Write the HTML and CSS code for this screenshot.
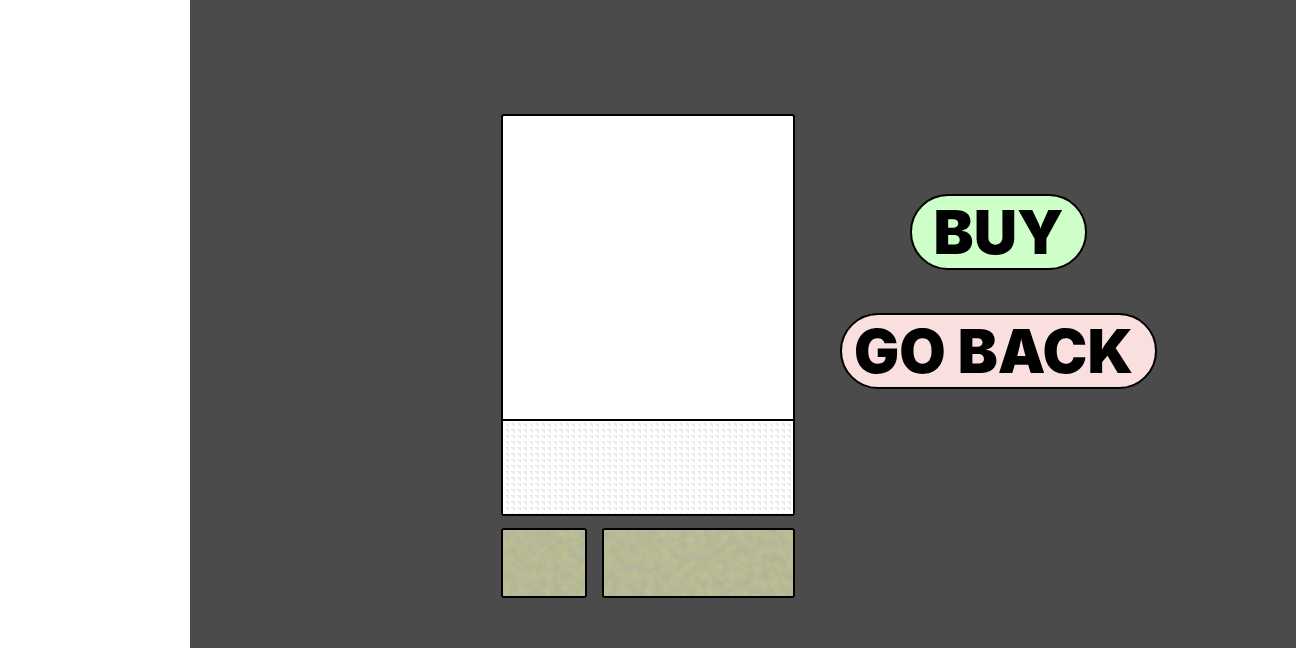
FILE: index.html
```html
<!DOCTYPE html>
<html lang="en">
<head>
<meta charset="utf-8">
<title>Buy card</title>
<link rel="stylesheet" href="styles.css">
</head>
<body>
<div class="page">
  <aside class="sidebar"></aside>
  <main class="stage">
    <section class="card">
      <div class="frame">
        <div class="picture"></div>
        <div class="mesh"></div>
      </div>
      <div class="labels">
        <div class="label">
          <svg class="paper" aria-hidden="true">
            <filter id="grain" x="0" y="0" width="100%" height="100%" color-interpolation-filters="sRGB">
              <feTurbulence type="fractalNoise" baseFrequency="0.12" numOctaves="4" seed="7"/>
              <feColorMatrix values="0.10 0 0 0 0.67  0.07 0 0 0 0.693  0 0.09 0 0 0.54  0 0 0 0 1"/>
            </filter>
            <rect width="100%" height="100%" filter="url(#grain)"/>
          </svg>
        </div>
        <div class="label">
          <svg class="paper" aria-hidden="true"><rect width="100%" height="100%" filter="url(#grain)"/></svg>
        </div>
      </div>
    </section>
    <div class="actions">
      <button class="action buy" type="button">BUY</button>
      <button class="action back" type="button">GO BACK</button>
    </div>
  </main>
</div>
</body>
</html>
```
FILE: styles.css
```css
* { box-sizing: border-box; }
body { margin: 0; background: #fff; }
.page { display: flex; min-height: 100vh; }
.sidebar { flex: none; width: 190px; background: #fff; }
.stage {
  flex: 1;
  display: flex;
  align-items: flex-start;
  gap: 45px;
  padding: 114px 0 50px 311px;
  background: #4b4b4b;
}
.card { flex: none; width: 294px; }
.frame {
  border: 2px solid #000;
  border-radius: 3px;
  overflow: hidden;
  background: #fff;
}
.picture { height: 303px; }
.mesh {
  height: 95px;
  border-top: 2px solid #000;
  background-image:
    linear-gradient(#fff, #fff),
    linear-gradient(#ebebeb, #ebebeb);
  background-color: #fff;
  background: conic-gradient(from 0deg at 2px 2px, #f1f1f1 0 0) 0 0 / 6px 6px;
  background: 
    linear-gradient(90deg, #fff 2px, transparent 2px) 0 0 / 6px 6px,
    linear-gradient(#fff 2px, transparent 2px) 0 0 / 6px 6px,
    linear-gradient(45deg, #fff 50%, #ececec 50%) 0 0 / 6px 6px;
}
.labels {
  display: grid;
  grid-template-columns: 86px 1fr;
  gap: 15px;
  margin-top: 12px;
}
.label {
  height: 70px;
  border: 2px solid #000;
  border-radius: 3px;
  overflow: hidden;
  background: #b9bc93;
}
.paper { display: block; width: 100%; height: 100%; }
.actions {
  display: flex;
  flex-direction: column;
  align-items: center;
  gap: 43px;
  padding-top: 80px;
}
.action {
  height: 76px;
  border: 2px solid #000;
  border-radius: 38px;
  color: #000;
  font: 900 60px/72px Inter, "Open Sans", sans-serif;
}
.buy { padding: 0 22px; background: #cfffc8; }
.back { padding: 0 22px 0 12px; background: #fadfdf; }
```
